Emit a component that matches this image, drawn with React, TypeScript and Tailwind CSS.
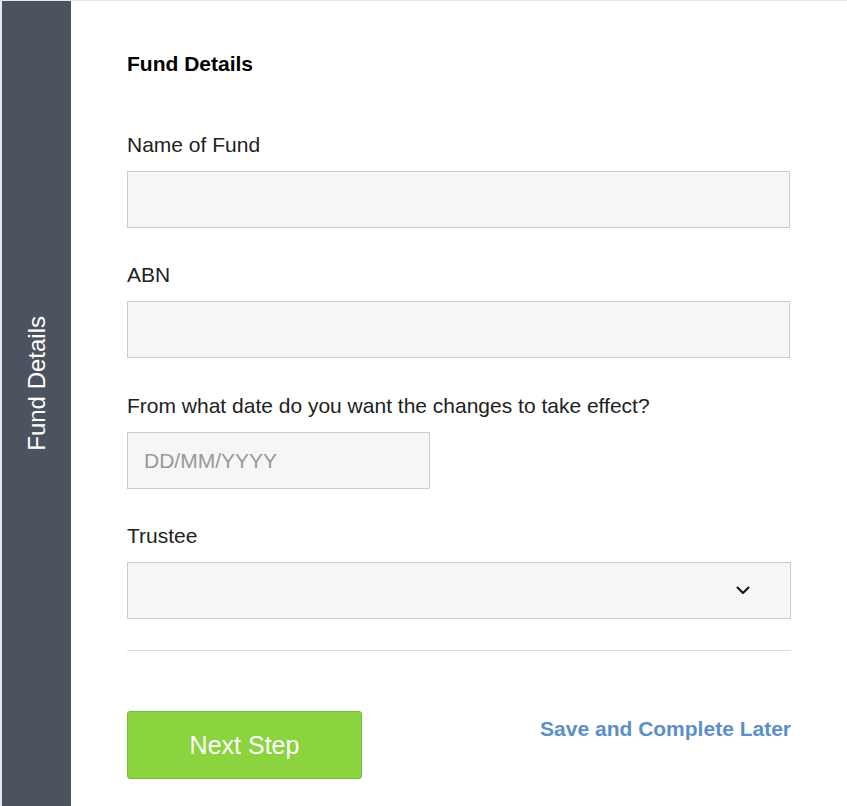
import React from "react";

function Chevron() {
  return (
    <svg width="14" height="9" viewBox="0 0 14 9" fill="none" className="block">
      <path d="M1.5 1.5 L7 7 L12.5 1.5" stroke="#111" strokeWidth="2" strokeLinecap="round" strokeLinejoin="round" />
    </svg>
  );
}

export default function App() {
  const font = { fontFamily: '"Liberation Sans", Arial, sans-serif' };
  return (
    <div
      className="w-[847px] h-[806px] flex border-t border-[#e6e9f1] bg-white overflow-hidden"
      style={font}
    >
      <div className="w-[2px] bg-[#e6e9f1]" />
      <div className="w-[69px] bg-[#4b535e] flex items-center justify-center pb-[40px]">
        <span className="text-white text-[24px] leading-none [writing-mode:vertical-rl] rotate-180 whitespace-nowrap">
          Fund Details
        </span>
      </div>
      <div className="flex-1 pl-[56px] pr-[56px] pt-[51px] flex flex-col">
        <h2 className="text-[21px] leading-[24px] font-bold text-black">Fund Details</h2>

        <label className="mt-[57px] text-[21px] leading-[24px] text-[#222]">Name of Fund</label>
        <div className="mt-[14px] h-[57px] w-[663px] bg-[#f6f6f6] border border-[#cccccc]" />

        <label className="mt-[35px] text-[21px] leading-[24px] text-[#222]">ABN</label>
        <div className="mt-[14px] h-[57px] w-[663px] bg-[#f6f6f6] border border-[#cccccc]" />

        <label className="mt-[36px] text-[21px] leading-[24px] text-[#222]">
          From what date do you want the changes to take effect?
        </label>
        <div className="mt-[14px] h-[57px] w-[303px] bg-[#f6f6f6] border border-[#cccccc] flex items-center pl-[16px]">
          <span className="text-[21px] text-[#999999]">DD/MM/YYYY</span>
        </div>

        <label className="mt-[35px] text-[21px] leading-[24px] text-[#222]">Trustee</label>
        <div className="mt-[14px] h-[57px] w-[664px] bg-[#f6f6f6] border border-[#cccccc] flex items-center justify-end pr-[40px]">
          <Chevron />
        </div>

        <div className="mt-[31px] h-px w-[664px] bg-[#dddddd]" />

        <div className="mt-[60px] flex items-start justify-between w-[664px]">
          <button className="w-[235px] h-[68px] bg-[#8bd33f] border border-[#72bd36] rounded-[3px] text-white text-[25px] leading-none">
            Next Step
          </button>
          <a className="mt-[6px] text-[21px] leading-[24px] font-bold text-[#5b8fc7]">
            Save and Complete Later
          </a>
        </div>
      </div>
    </div>
  );
}
